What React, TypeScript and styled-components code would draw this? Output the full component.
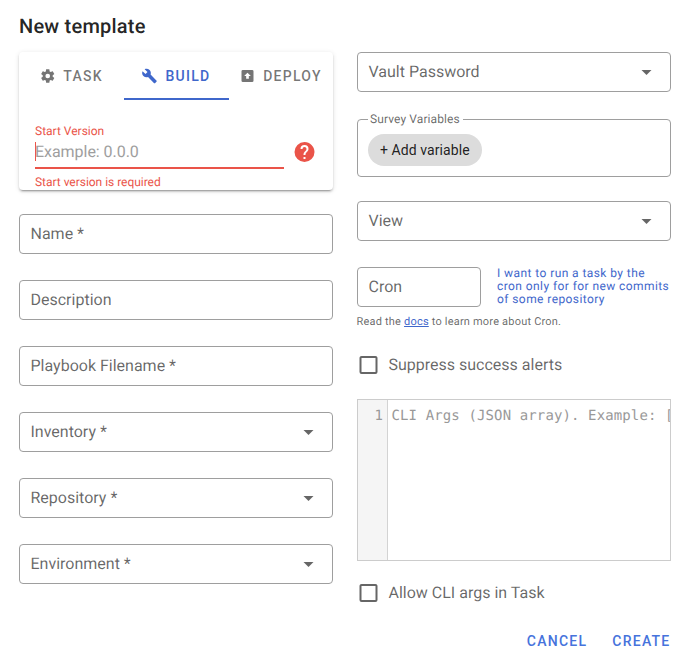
import React from 'react';
import styled, { createGlobalStyle, css } from 'styled-components';

const GlobalStyle = createGlobalStyle`
  *, *::before, *::after { box-sizing: border-box; }
  body {
    margin: 0;
    background: #fff;
    font-family: Roboto, "Liberation Sans", sans-serif;
    font-size: 16px;
    line-height: 1.5;
    color: rgba(0, 0, 0, 0.87);
    text-rendering: geometricPrecision;
  }
`;

const PRIMARY = '#3f67cb';
const ERROR = '#ea5449';
const MUTED = 'rgba(0, 0, 0, 0.6)';
const OUTLINE = '#9e9e9e';

const Dialog = styled.main`
  width: 690px;
  height: 661px;
  padding: 10px 19px 0;
  overflow: hidden;
`;

const Title = styled.h1`
  margin: 0;
  height: 42px;
  font-size: 20px;
  font-weight: 500;
  line-height: 32px;
  letter-spacing: 0.22px;
`;

const Columns = styled.div`
  display: grid;
  grid-template-columns: 314px 314px;
  column-gap: 24px;
  height: 575px;
`;

const Column = styled.section`
  display: flex;
  flex-direction: column;
  align-items: stretch;
`;

const Card = styled.div`
  height: 138px;
  margin-bottom: 24px;
  border-radius: 4px;
  background: #fff;
  box-shadow: 0 3px 1px -2px rgba(0, 0, 0, 0.2), 0 2px 2px 0 rgba(0, 0, 0, 0.14), 0 1px 5px 0 rgba(0, 0, 0, 0.12);
`;

const Tabs = styled.div`
  display: grid;
  grid-template-columns: 105px 105px 104px;
  height: 48px;
`;

const Tab = styled.button<{ $active?: boolean }>`
  display: flex;
  align-items: center;
  justify-content: center;
  gap: 8px;
  padding: 0 1px 0 0;
  border: 0;
  border-bottom: 2px solid ${(p) => (p.$active ? PRIMARY : 'transparent')};
  border-top: 2px solid transparent;
  background: none;
  color: ${(p) => (p.$active ? PRIMARY : 'rgba(0, 0, 0, 0.54)')};
  font: 500 14px/20px Roboto, sans-serif;
  letter-spacing: 1.25px;
`;

const VersionRow = styled.div`
  display: flex;
  gap: 8px;
  padding: 24px 0 0 16px;
`;

const VersionField = styled.div`
  width: 249px;
  color: ${ERROR};
  font-size: 12px;
  line-height: 14px;
`;

const VersionInput = styled.div`
  height: 31px;
  padding-top: 4px;
  border-bottom: 2px solid ${ERROR};
  color: #9e9e9e;
  font-size: 16px;
  line-height: 19px;
  letter-spacing: -0.04px;
  display: flex;
`;

const Caret = styled.span`
  width: 1px;
  height: 19px;
  margin-right: -1px;
  background: ${ERROR};
`;

const VersionMessage = styled.div`
  padding-top: 6px;
  letter-spacing: -0.03px;
`;

const HelpSlot = styled.div`
  padding-top: 16px;
  color: ${ERROR};
  line-height: 0;
`;

const outlined = css`
  border: 1px solid ${OUTLINE};
  border-radius: 4px;
`;

const Field = styled.div<{ $gap?: number; $width?: number }>`
  ${outlined}
  display: flex;
  flex: none;
  align-items: center;
  justify-content: space-between;
  width: ${(p) => p.$width ?? 314}px;
  height: 40px;
  margin-bottom: ${(p) => p.$gap ?? 26}px;
  padding: 0 12px 0 10.5px;
  color: ${MUTED};
  font-size: 16px;
`;

const Survey = styled.fieldset`
  ${outlined}
  height: 65px;
  margin: -6px 0 24px;
  padding: 0 10px;
  min-width: 0;
`;

const SurveyLegend = styled.legend`
  padding: 0 3px 0 2px;
  color: ${MUTED};
  font-size: 12px;
  line-height: 14px;
  letter-spacing: 0.1px;
`;

const Chip = styled.button`
  display: block;
  height: 32px;
  margin-top: 8px;
  padding: 0 12px;
  border: 0;
  border-radius: 16px;
  background: #dcdcdc;
  color: rgba(0, 0, 0, 0.87);
  font: 400 14px/20px Roboto, sans-serif;
  letter-spacing: 0.08px;
`;

const CronRow = styled.div`
  display: flex;
  gap: 16px;
`;

const CronToggle = styled.a`
  flex: 1;
  color: ${PRIMARY};
  font-size: 12px;
  line-height: 13px;
  letter-spacing: 0.42px;
  white-space: nowrap;
`;

const CronHint = styled.p`
  margin: 0 0 23px -0.5px;
  color: ${MUTED};
  font-size: 11px;
  line-height: 16px;
  letter-spacing: 0.2px;
`;

const DocsLink = styled.a`
  color: ${PRIMARY};
  text-decoration: underline;
`;

const CheckRow = styled.label`
  display: flex;
  align-items: center;
  height: 24px;
  gap: 7.5px;
  color: ${MUTED};
`;

const Editor = styled.div`
  display: flex;
  flex: none;
  height: 162px;
  margin: 22px 0 20px;
  border: 1px solid #cccccc;
  overflow: hidden;
  color: #999;
  font-family: "DejaVu Sans Mono", monospace;
  font-size: 14px;
  line-height: 21px;
`;

const Gutter = styled.div`
  flex: none;
  width: 30px;
  padding: 6px 4px 0 0;
  border-right: 1px solid #d3d3d3;
  background: #f5f5f5;
  text-align: right;
`;

const Code = styled.div`
  padding: 6px 0 0 3.5px;
  letter-spacing: 0.12px;
  white-space: pre;
`;

const Actions = styled.footer`
  display: flex;
  justify-content: flex-end;
  gap: 25px;
  padding: 4px 0.5px 0 0;
`;

const Action = styled.button`
  padding: 0;
  border: 0;
  background: none;
  color: #4673dc;
  font: 500 14px/20px Roboto, sans-serif;
  letter-spacing: 1.25px;
`;

const Glyph = styled.svg`
  display: block;
  flex: none;
  fill: currentColor;
  overflow: visible;
`;

const icons = {
  cog: 'M12,15.5A3.5,3.5 0 0,1 8.5,12A3.5,3.5 0 0,1 12,8.5A3.5,3.5 0 0,1 15.5,12A3.5,3.5 0 0,1 12,15.5M19.43,12.97C19.47,12.65 19.5,12.33 19.5,12C19.5,11.67 19.47,11.34 19.43,11L21.54,9.37C21.73,9.22 21.78,8.95 21.66,8.73L19.66,5.27C19.54,5.05 19.27,4.96 19.05,5.05L16.56,6.05C16.04,5.66 15.5,5.32 14.87,5.07L14.5,2.42C14.46,2.18 14.25,2 14,2H10C9.75,2 9.54,2.18 9.5,2.42L9.13,5.07C8.5,5.32 7.96,5.66 7.44,6.05L4.95,5.05C4.73,4.96 4.46,5.05 4.34,5.27L2.34,8.73C2.21,8.95 2.27,9.22 2.46,9.37L4.57,11C4.53,11.34 4.5,11.67 4.5,12C4.5,12.33 4.53,12.65 4.57,12.97L2.46,14.63C2.27,14.78 2.21,15.05 2.34,15.27L4.34,18.73C4.46,18.95 4.73,19.03 4.95,18.95L7.44,17.94C7.96,18.34 8.5,18.68 9.13,18.93L9.5,21.58C9.54,21.82 9.75,22 10,22H14C14.25,22 14.46,21.82 14.5,21.58L14.87,18.93C15.5,18.67 16.04,18.34 16.56,17.94L19.05,18.95C19.27,19.03 19.54,18.95 19.66,18.73L21.66,15.27C21.78,15.05 21.73,14.78 21.54,14.63L19.43,12.97Z',
  wrench: 'M22.7,19L13.6,9.9C14.5,7.6 14,4.9 12.1,3C10.1,1 7.1,0.6 4.7,1.7L9,6L6,9L1.6,4.7C0.4,7.1 0.9,10.1 2.9,12.1C4.8,14 7.5,14.5 9.8,13.6L18.9,22.7C19.3,23.1 19.9,23.1 20.3,22.7L22.6,20.4C23.1,20 23.1,19.3 22.7,19Z',
  upBox: 'M19,3H5A2,2 0 0,0 3,5V19A2,2 0 0,0 5,21H19A2,2 0 0,0 21,19V5A2,2 0 0,0 19,3M12,7L17,12H14V16H10V12H7L12,7Z',
  help: 'M15.07,11.25L14.17,12.17C13.45,12.89 13,13.5 13,15H11V14.5C11,13.39 11.45,12.39 12.17,11.67L13.41,10.41C13.78,10.05 14,9.55 14,9C14,7.89 13.1,7 12,7A2,2 0 0,0 10,9H8A4,4 0 0,1 12,5A4,4 0 0,1 16,9C16,9.88 15.64,10.67 15.07,11.25M13,19H11V17H13M12,2A10,10 0 0,0 2,12A10,10 0 0,0 12,22A10,10 0 0,0 22,12C22,6.47 17.5,2 12,2Z',
  checkbox: 'M19,3H5C3.89,3 3,3.89 3,5V19A2,2 0 0,0 5,21H19A2,2 0 0,0 21,19V5C21,3.89 20.1,3 19,3M19,5V19H5V5H19Z',
  menuDown: 'M7,10L12,15L17,10H7Z',
};

// dx nudges the glyph within its box, in viewBox units.
const Icon = ({ name, size = 24, dx = 0 }: { name: keyof typeof icons; size?: number; dx?: number }) => (
  <Glyph width={size} height={size} viewBox={`${-dx} 0 24 24`} fillRule="evenodd">
    <path d={icons[name]} />
  </Glyph>
);

const Select = ({ label }: { label: string }) => (
  <Field>
    <span>{label}</span>
    <Icon name="menuDown" dx={0.5} />
  </Field>
);

export default function App() {
  return (
    <>
      <GlobalStyle />
      <Dialog>
        <Title>New template</Title>
        <Columns>
          <Column>
            <Card>
              <Tabs>
                <Tab><Icon name="cog" size={16} dx={1.1} />TASK</Tab>
                <Tab $active><Icon name="wrench" size={16} dx={-0.75} />BUILD</Tab>
                <Tab><Icon name="upBox" size={16} dx={0.75} />DEPLOY</Tab>
              </Tabs>
              <VersionRow>
                <VersionField>
                  <div>Start Version</div>
                  <VersionInput><Caret />Example: 0.0.0</VersionInput>
                  <VersionMessage>Start version is required</VersionMessage>
                </VersionField>
                <HelpSlot><Icon name="help" dx={0.5} /></HelpSlot>
              </VersionRow>
            </Card>
            <Field>Name *</Field>
            <Field>Description</Field>
            <Field>Playbook Filename *</Field>
            <Select label="Inventory *" />
            <Select label="Repository *" />
            <Select label="Environment *" />
          </Column>
          <Column>
            <Select label="Vault Password" />
            <Survey>
              <SurveyLegend>Survey Variables</SurveyLegend>
              <Chip>+ Add variable</Chip>
            </Survey>
            <Select label="View" />
            <CronRow>
              <Field $width={124} $gap={7}>Cron</Field>
              <CronToggle>
                I want to run a task by the<br />
                cron only for for new commits<br />
                of some repository
              </CronToggle>
            </CronRow>
            <CronHint>Read the <DocsLink>docs</DocsLink> to learn more about Cron.</CronHint>
            <CheckRow><Icon name="checkbox" dx={-0.5} />Suppress success alerts</CheckRow>
            <Editor>
              <Gutter>1</Gutter>
              <Code>CLI Args (JSON array). Example: [</Code>
            </Editor>
            <CheckRow><Icon name="checkbox" dx={-0.5} />Allow CLI args in Task</CheckRow>
          </Column>
        </Columns>
        <Actions>
          <Action>CANCEL</Action>
          <Action>CREATE</Action>
        </Actions>
      </Dialog>
    </>
  );
}
